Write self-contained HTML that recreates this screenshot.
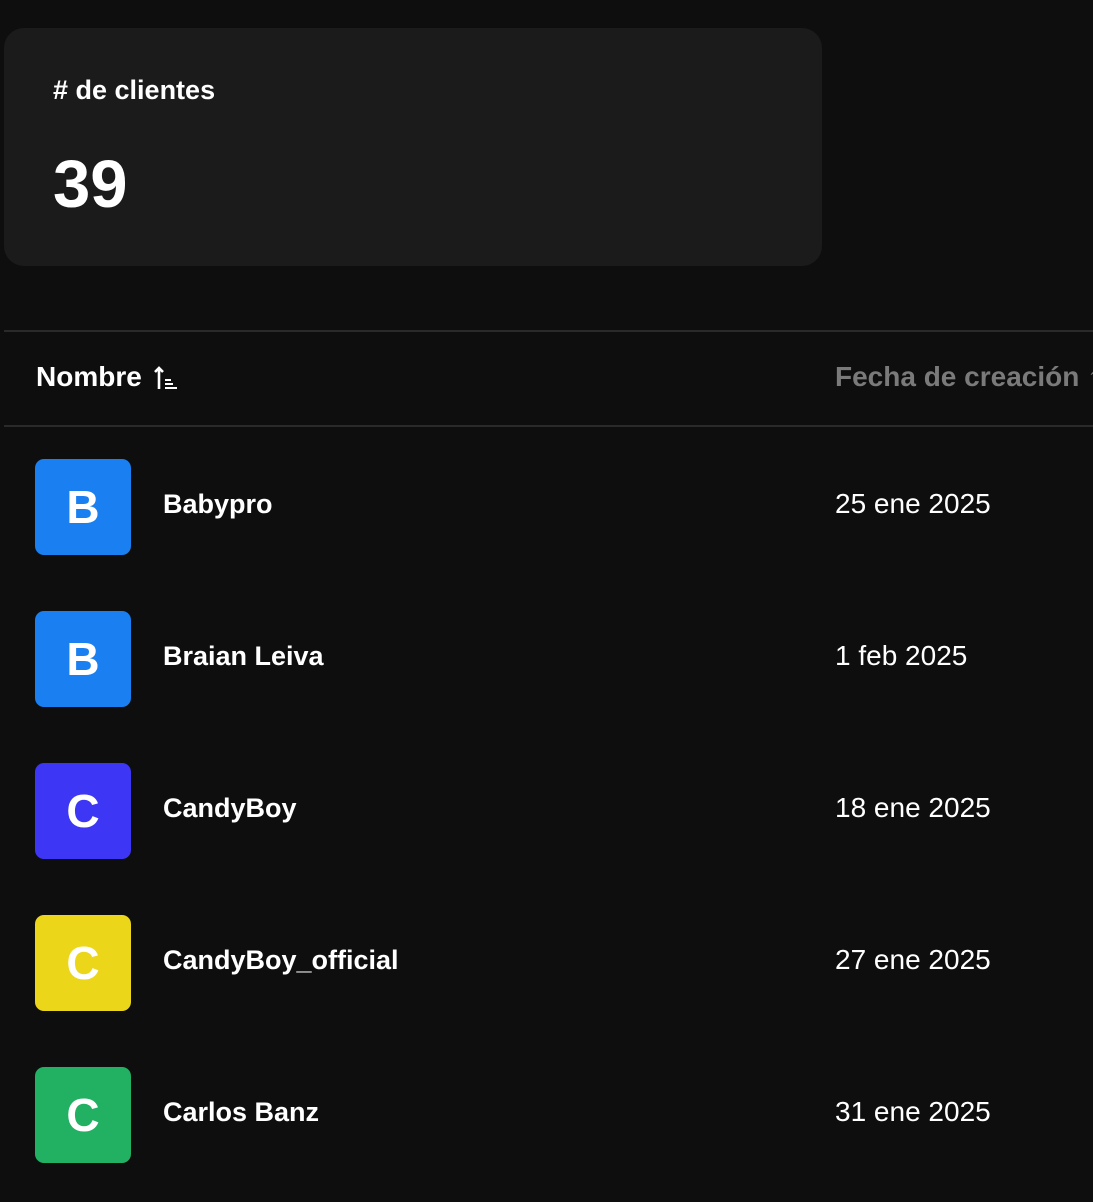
<!DOCTYPE html>
<html><head><meta charset="utf-8"><style>
body{margin:0;width:1093px;height:1202px;background:#0e0e0e;font-family:"Liberation Sans",sans-serif;color:#fff;position:relative;overflow:hidden}
.card{position:absolute;left:4px;top:28px;width:818px;height:238px;background:#1b1b1b;border-radius:20px}
.t{position:absolute;white-space:nowrap}
.line{position:absolute;left:4px;right:0;height:2px;background:#2a2a2a}
.av{position:absolute;left:35px;width:96px;height:96px;border-radius:9px;font-size:46px;font-weight:bold;display:flex;align-items:center;justify-content:center}
.nm{position:absolute;left:163px;font-size:27px;font-weight:bold}
.dt{position:absolute;left:835px;font-size:28px}
</style></head><body>
<div class="card"></div>
<div class="t" style="left:53px;top:75px;font-size:27px;font-weight:bold"># de clientes</div>
<div class="t" style="left:53px;top:146px;font-size:67px;font-weight:bold">39</div>
<div class="line" style="top:330px"></div>
<div class="line" style="top:425px"></div>
<div class="t" style="left:36px;top:361px;font-size:28px;font-weight:bold">Nombre</div>
<svg class="t" style="left:153px;top:365px" width="26" height="26" viewBox="0 0 26 26"><path d="M6 24V3M2 7l4-4 4 4" stroke="#fff" stroke-width="2.6" fill="none"/><path d="M12 15h6M12 19h8M12 23h12" stroke="#fff" stroke-width="2"/></svg>
<div class="t" style="left:835px;top:361px;font-size:28px;font-weight:bold;color:#7a7a7a">Fecha de creación ↑</div>
<div class="av" style="top:459px;background:#1a7ff0">B</div><div class="nm" style="top:489px">Babypro</div><div class="dt" style="top:488px">25 ene 2025</div>
<div class="av" style="top:611px;background:#1a7ff0">B</div><div class="nm" style="top:641px">Braian Leiva</div><div class="dt" style="top:640px">1 feb 2025</div>
<div class="av" style="top:763px;background:#3d37f5">C</div><div class="nm" style="top:793px">CandyBoy</div><div class="dt" style="top:792px">18 ene 2025</div>
<div class="av" style="top:915px;background:#ecd61a">C</div><div class="nm" style="top:945px">CandyBoy_official</div><div class="dt" style="top:944px">27 ene 2025</div>
<div class="av" style="top:1067px;background:#22b063">C</div><div class="nm" style="top:1097px">Carlos Banz</div><div class="dt" style="top:1096px">31 ene 2025</div>
</body></html>
